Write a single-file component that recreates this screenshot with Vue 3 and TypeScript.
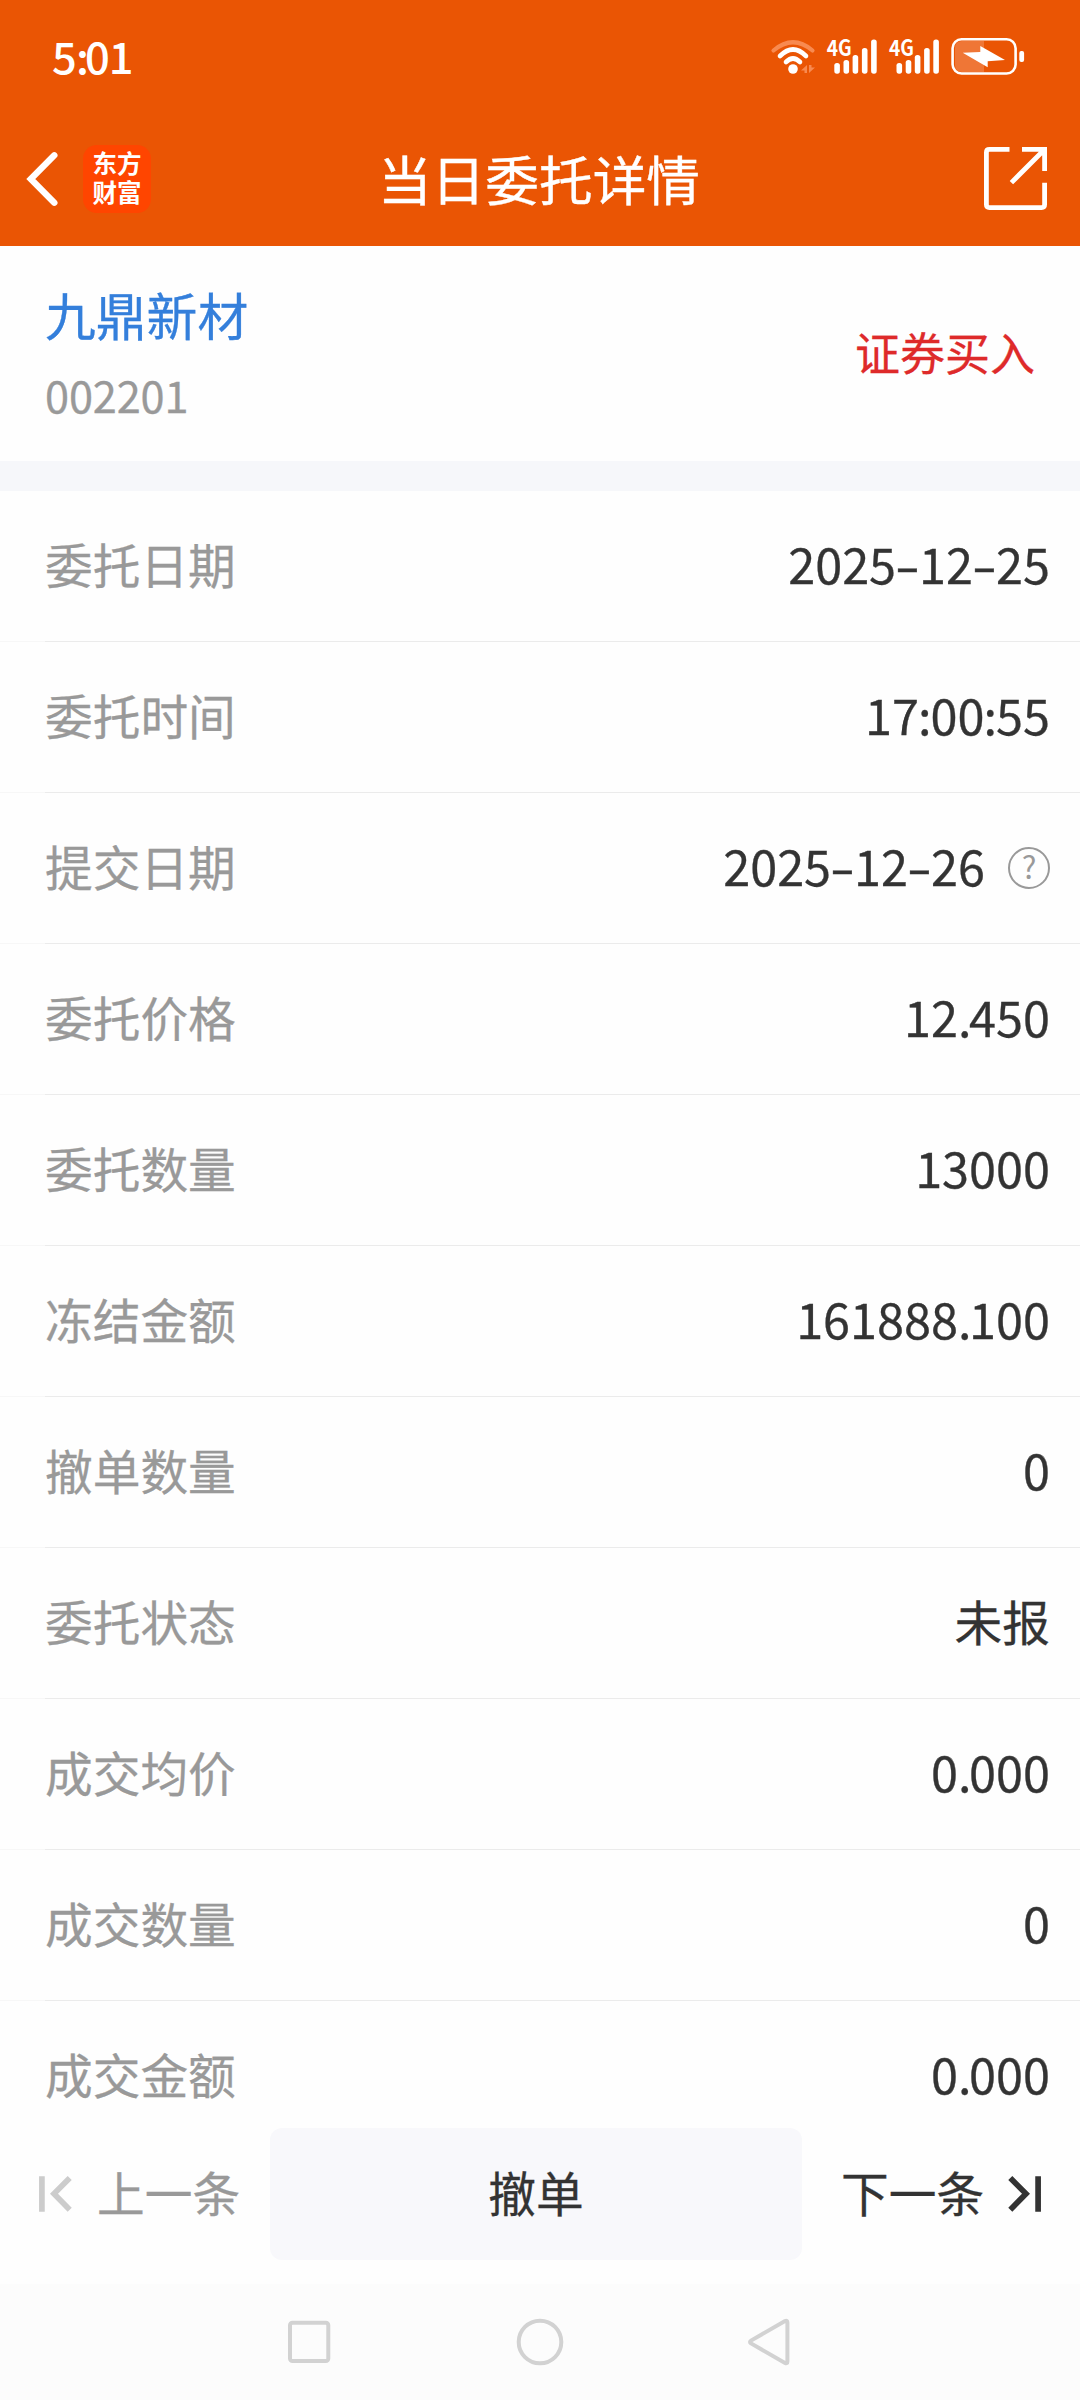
<script setup lang="ts">
interface Row {
  label: string
  value: string
  help?: boolean
}

interface Glyph {
  ch: string
  kind: string
}

const rows: Row[] = [
  { label: '委托日期', value: '2025-12-25' },
  { label: '委托时间', value: '17:00:55' },
  { label: '提交日期', value: '2025-12-26', help: true },
  { label: '委托价格', value: '12.450' },
  { label: '委托数量', value: '13000' },
  { label: '冻结金额', value: '161888.100' },
  { label: '撤单数量', value: '0' },
  { label: '委托状态', value: '未报' },
  { label: '成交均价', value: '0.000' },
  { label: '成交数量', value: '0' },
  { label: '成交金额', value: '0.000' },
]

const kinds: Record<string, string> = { '-': 'dash', '.': 'dot', ':': 'colon' }

// Punctuation gets its own advance width; Chinese values are set a little smaller
const glyphs = (value: string): Glyph[] =>
  value
    .split(/([-.:])/)
    .filter((ch) => ch !== '')
    .map((ch) => ({ ch, kind: kinds[ch] ?? (/\d/.test(ch) ? 'run' : 'han') }))

const signals: number[] = [0, 62.2]
const bars = [
  { x: 64.3, y: 33 },
  { x: 73.5, y: 30 },
  { x: 82.6, y: 25 },
  { x: 91.9, y: 18 },
  { x: 101.1, y: 9.5 },
]
</script>

<template>
  <div class="screen">
    <header class="top">
      <div class="status">
        <span class="clock">5<i>:</i>01</span>
        <svg class="sys" width="260" height="50" viewBox="0 0 260 50" fill="none">
          <g stroke="#fff" stroke-linecap="round">
            <path d="M3.5 20.5Q23 4 42.5 20.5" stroke="#f88a50" stroke-width="4.2" />
            <path d="M10 26Q23 13 36 26" stroke-width="4.6" />
            <path d="M16 32Q23 25 30 32" stroke-width="4.6" />
          </g>
          <circle cx="23" cy="39" r="4.8" fill="#fff" />
          <path d="M31 40.5L37 35V43H34.5V40.5ZM39 35H41.5V37.5H45L39 43Z" fill="#f88a50" />
          <g v-for="dx in signals" :key="dx" :transform="`translate(${dx} 0)`" fill="#fff">
            <text x="56.8" y="26" textLength="25" lengthAdjust="spacingAndGlyphs" class="net">4G</text>
            <rect v-for="b in bars" :key="b.x" :x="b.x" :y="b.y" width="5.6" :height="43.7 - b.y" rx="2.6" />
          </g>
          <path d="M214 11H192Q185 11 185 18V35Q185 42 192 42H214Z" fill="#ef7636" />
          <rect x="182.6" y="9.3" width="63" height="34.2" rx="9" stroke="#fff" stroke-width="2.6" />
          <path d="M192.7 22.7L210.3 22V16L235 30L217.7 31.3V37.3Z" fill="#fff" />
          <rect x="249.3" y="21" width="4.8" height="11" rx="2" fill="#fff" />
        </svg>
      </div>
      <div class="bar">
        <div class="left">
          <svg width="34" height="56" viewBox="0 0 34 56" fill="none" stroke="#fff" stroke-width="6.4" stroke-linecap="round">
            <path d="M30.3 4.3L6.8 28L30.3 51.7" />
          </svg>
          <div class="logo">东方<br />财富</div>
        </div>
        <h1>当日委托详情</h1>
        <svg class="share" width="63" height="63" viewBox="0 0 63 63" fill="none" stroke="#fff" stroke-width="4.8">
          <path d="M25.5 2.4H5.4Q2.4 2.4 2.4 5.4V57.6Q2.4 60.6 5.4 60.6H57.6Q60.6 60.6 60.6 57.6V35.8" />
          <path d="M38 2.4H60.6V24M60 3L27.4 35.6" />
        </svg>
      </div>
    </header>

    <section class="stock">
      <div>
        <div class="name">九鼎新材</div>
        <div class="code">002201</div>
      </div>
      <div class="side">证券买入</div>
    </section>

    <main class="list">
      <div v-for="row in rows" :key="row.label" class="row">
        <span class="label">{{ row.label }}</span>
        <span class="value"><span v-for="(g, i) in glyphs(row.value)" :key="i" :class="g.kind">{{ g.ch }}</span></span>
        <span v-if="row.help" class="help">?</span>
      </div>
    </main>

    <footer class="actions">
      <div class="step prev">
        <svg width="34" height="36" viewBox="0 0 34 36" fill="none" stroke="#ccc" stroke-width="5.7">
          <path d="M2.9 0.3V35.7M30.7 2L15 17.8L30.7 33.7" />
        </svg>
        <span>上一条</span>
      </div>
      <button class="cancel">撤单</button>
      <div class="step next">
        <span>下一条</span>
        <svg width="34" height="36" viewBox="0 0 34 36" fill="none" stroke="#333" stroke-width="5.7">
          <path d="M31.1 0.3V35.7M3.3 2L19 17.8L3.3 33.7" />
        </svg>
      </div>
    </footer>

    <nav class="nav">
      <svg width="48" height="48" viewBox="0 0 48 48"><rect x="5" y="4.8" width="38.3" height="38.3" rx="2.5" /></svg>
      <svg width="48" height="48" viewBox="0 0 48 48"><circle cx="24" cy="24" r="21.3" /></svg>
      <svg width="48" height="48" viewBox="0 0 48 48"><path d="M38 3.1Q40.4 2 40.4 4.6V43.4Q40.4 46 38 44.9L4 25.4Q2 24 4 22.6Z" /></svg>
    </nav>
  </div>
</template>

<style>
body {
  background: #fff;
}
</style>

<style scoped>
.screen {
  width: 1080px;
  height: 2400px;
  display: flex;
  flex-direction: column;
  overflow: hidden;
  background: #fefefe;
  color: #333;
  font-family: "Noto Sans CJK SC", sans-serif;
  -webkit-text-stroke: 0.3px currentColor;
}
.top {
  height: 246px;
  flex: none;
  background: #ea5504;
  color: #fff;
}
.status {
  height: 110px;
  box-sizing: border-box;
  padding: 0 50px 0 52px;
  display: flex;
  justify-content: space-between;
  align-items: flex-start;
}
.clock {
  font-size: 43.5px;
  font-weight: 500;
  line-height: 60px;
  margin-top: 26px;
  letter-spacing: -0.9px;
  -webkit-text-stroke: 0;
}
.clock i {
  font-style: normal;
  letter-spacing: -4px;
}
.sys {
  margin-top: 30px;
}
.net {
  font-family: "Noto Sans CJK SC", sans-serif;
  font-size: 22px;
  font-weight: 700;
  -webkit-text-stroke: 0;
}
.bar {
  height: 136px;
  box-sizing: border-box;
  padding: 0 33px 0 24px;
  display: grid;
  grid-template-columns: 1fr auto 1fr;
  align-items: center;
}
.left {
  display: flex;
  align-items: center;
  gap: 25px;
  margin-top: 1px;
}
.logo {
  width: 68px;
  height: 68px;
  border-radius: 14px;
  background: #ff4500;
  box-sizing: border-box;
  padding-top: 3px;
  text-align: center;
  font-size: 24.5px;
  font-weight: 700;
  line-height: 29px;
  -webkit-text-stroke: 0;
}
h1 {
  margin: 0 0 1px 7px;
  font-size: 53.7px;
  font-weight: 400;
  line-height: 70px;
  -webkit-text-stroke: 0.4px currentColor;
}
.share {
  justify-self: end;
  margin-top: 1px;
}
.stock {
  height: 215px;
  flex: none;
  box-sizing: border-box;
  padding: 38px 45px 0 45px;
  display: flex;
  justify-content: space-between;
}
.name {
  font-size: 50.8px;
  line-height: 60px;
  color: #347fdb;
}
.code {
  margin-top: 20px;
  font-size: 43.3px;
  line-height: 60px;
  letter-spacing: -0.15px;
  color: #999;
}
.side {
  margin-top: 38px;
  font-size: 45px;
  line-height: 60px;
  color: #de2a2a;
}
.list {
  flex: 1;
  min-height: 0;
  border-top: 30px solid #f6f7fa;
}
.row {
  height: 151px;
  box-sizing: border-box;
  padding: 0 30px 6px 45px;
  display: flex;
  align-items: center;
  background: linear-gradient(90deg, #f7f7f7 45px, #ebebeb 45px) bottom / 100% 1px no-repeat;
}
.row:last-child {
  height: 113px;
  padding-top: 32px;
  padding-bottom: 0;
  background: none;
}
.label {
  flex: 1;
  font-size: 47.7px;
  line-height: 58px;
  margin-top: 1px;
  color: #999;
}
.value {
  font-size: 48.6px;
  line-height: 58px;
  margin-bottom: 1px;
  white-space: nowrap;
}
.han {
  font-size: 47.7px;
}
.dash {
  display: inline-block;
  width: 23px;
  text-align: center;
  transform: scaleX(1.5);
}
.dot {
  letter-spacing: -2.4px;
}
.colon {
  margin: 0 -1px;
}
.help {
  width: 42px;
  height: 42px;
  box-sizing: border-box;
  margin: 5px 0 0 23px;
  border: 2px solid #999;
  border-radius: 50%;
  font-size: 31px;
  line-height: 34px;
  text-align: center;
  color: #999;
  -webkit-text-stroke: 0;
}
.actions {
  height: 180px;
  flex: none;
  display: grid;
  grid-template-columns: 270px 532px 278px;
  align-items: center;
  font-size: 47.7px;
}
.step {
  display: flex;
  align-items: center;
}
.step span {
  line-height: 70px;
  margin-bottom: 4px;
}
.prev {
  padding-left: 39px;
  gap: 24px;
  color: #999;
}
.next {
  padding-left: 39px;
  gap: 23px;
}
.cancel {
  height: 132px;
  border: 0;
  border-radius: 12px;
  padding: 0 0 5px;
  background: #f8f8fb;
  color: #333;
  font: inherit;
  -webkit-text-stroke: inherit;
}
.nav {
  height: 116px;
  flex: none;
  display: flex;
  justify-content: center;
  gap: 183px;
  background: #fcfcfc;
}
.nav svg {
  margin-top: 34px;
  fill: none;
  stroke: #d2d2d2;
  stroke-width: 4;
}
</style>
